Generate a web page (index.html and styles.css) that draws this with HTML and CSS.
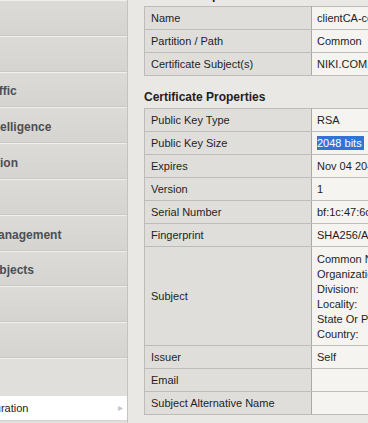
FILE: index.html
```html
<!DOCTYPE html>
<html lang="en">
<head>
    <meta charset="UTF-8">
    <meta name="viewport" content="width=device-width, initial-scale=1.0">
    <title>SSL Certificate List - Properties</title>
    <link rel="stylesheet" href="styles.css">
</head>
<body>
    <div class="page">
        <nav class="sidebar">
            <div class="sidebar-inner">
                <ul class="menu">
                    <li class="menu-item">iApps</li>
                    <li class="menu-item">DNS</li>
                    <li class="menu-item">Local Traffic</li>
                    <li class="menu-item">Traffic Intelligence</li>
                    <li class="menu-item">Acceleration</li>
                    <li class="menu-item">Access</li>
                    <li class="menu-item">Device Management</li>
                    <li class="menu-item">Shared Objects</li>
                    <li class="menu-item">Security</li>
                    <li class="menu-item">Network</li>
                    <li class="menu-item open">System</li>
                </ul>
                <ul class="submenu">
                    <li class="sub-item">Configuration<span class="arrow">&#9656;</span></li>
                </ul>
            </div>
        </nav>

        <main class="content">
            <h2 class="section-title first">General Properties</h2>
            <table class="props">
                <colgroup><col class="col-label"><col class="col-value"></colgroup>
                <tr><td class="label">Name</td><td class="value">clientCA-cert</td></tr>
                <tr><td class="label">Partition / Path</td><td class="value">Common</td></tr>
                <tr><td class="label">Certificate Subject(s)</td><td class="value">NIKI.COM, NIKI Client CA</td></tr>
            </table>

            <h2 class="section-title">Certificate Properties</h2>
            <table class="props">
                <colgroup><col class="col-label"><col class="col-value"></colgroup>
                <tr><td class="label">Public Key Type</td><td class="value">RSA</td></tr>
                <tr><td class="label">Public Key Size</td><td class="value"><span class="selected">2048 bits</span></td></tr>
                <tr><td class="label">Expires</td><td class="value">Nov 04 2045 10:12:33 GMT</td></tr>
                <tr><td class="label">Version</td><td class="value">1</td></tr>
                <tr><td class="label">Serial Number</td><td class="value">bf:1c:47:6c:21:9e:0a:d3</td></tr>
                <tr><td class="label">Fingerprint</td><td class="value">SHA256/A3:5F:09:7C:E1:42</td></tr>
                <tr>
                    <td class="label">Subject</td>
                    <td class="value subject">
                        <div>Common Name: NIKI Client CA</div>
                        <div>Organization: NIKI</div>
                        <div>Division:</div>
                        <div>Locality:</div>
                        <div>State Or Province:</div>
                        <div>Country:</div>
                    </td>
                </tr>
                <tr><td class="label">Issuer</td><td class="value">Self</td></tr>
                <tr><td class="label">Email</td><td class="value"></td></tr>
                <tr><td class="label">Subject Alternative Name</td><td class="value"></td></tr>
            </table>
        </main>
    </div>
</body>
</html>
```

FILE: styles.css
```css
* {
    margin: 0;
    padding: 0;
    box-sizing: border-box;
}
html, body {
    height: 100%;
    overflow: hidden;
}
body {
    background-color: #e9e8e4;
    font-family: "Liberation Sans", Arial, sans-serif;
    color: #1e1e1e;
}
.page {
    display: flex;
    height: 100%;
}
.sidebar {
    flex: none;
    width: 128px;
    height: 100%;
    overflow: hidden;
    border-right: 1px solid #c4c3bf;
    background-color: #e0dfdb;
}
.sidebar-inner {
    width: 207px;
    margin-left: -80px;
}
.menu, .submenu {
    list-style: none;
}
.menu-item {
    height: 35.8px;
    padding-left: 26px;
    padding-top: 4px;
    display: flex;
    align-items: center;
    font-size: 12px;
    font-weight: bold;
    color: #4b4e53;
    white-space: nowrap;
    border-top: 1px solid #f1f0ed;
    border-bottom: 1px solid #c9c8c4;
    background: linear-gradient(#dcdbd7, #d5d4d0);
}
.menu-item.open {
    height: 38px;
    border-bottom: none;
    background: #e0dfdb;
    color: transparent;
}
.sub-item {
    height: 25px;
    padding-left: 43px;
    padding-right: 4px;
    display: flex;
    align-items: center;
    justify-content: space-between;
    font-size: 11px;
    color: #222;
    white-space: nowrap;
    background-color: #fff;
    border-bottom: 1px solid #d4d3cf;
}
.arrow {
    font-size: 10px;
    color: #c8c8c8;
}
.content {
    flex: none;
    padding-left: 16px;
}
.section-title {
    font-size: 12px;
    font-weight: bold;
    line-height: 15px;
    color: #1e1e1e;
    margin: 14px 0 3px;
    white-space: nowrap;
}
.section-title.first {
    margin-top: -12px;
}
.props {
    width: 560px;
    table-layout: fixed;
    border-collapse: collapse;
    border: 1px solid #9d9d9b;
    font-size: 11px;
    line-height: 14px;
}
.col-label {
    width: 167px;
}
.props td {
    border: 1px solid #bdbcb8;
    padding: 4px 6px;
    white-space: nowrap;
    vertical-align: middle;
}
.props td.label {
    background-color: #dfdeda;
    border-right: 1px solid #a9a8a5;
}
.props td.value {
    background-color: #f5f4f1;
    padding-left: 5px;
}
.props td.subject {
    padding-top: 5px;
    padding-bottom: 3px;
    line-height: 15px;
}
.selected {
    background-color: #3274d6;
    color: #fff;
    padding: 1px 2px 1px 0;
}
```
